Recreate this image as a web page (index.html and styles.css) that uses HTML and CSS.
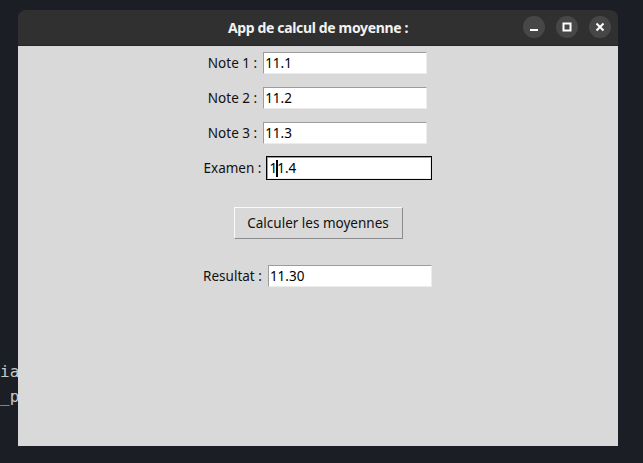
FILE: index.html
```html
<!DOCTYPE html>
<html lang="fr">
<head>
<meta charset="utf-8">
<title>App de calcul de moyenne</title>
<link rel="stylesheet" href="styles.css">
</head>
<body>
<div class="desktop">
  <pre class="term">ia
_p</pre>
  <div class="window">
    <div class="titlebar">
      <span class="title">App de calcul de moyenne :</span>
      <div class="controls">
        <span class="ctl"><svg width="10" height="10" viewBox="0 0 10 10"><rect x="1" y="7" width="8" height="2" fill="#fff"/></svg></span>
        <span class="ctl"><svg width="10" height="10" viewBox="0 0 10 10"><rect x="1.5" y="1.5" width="7" height="7" fill="none" stroke="#fff" stroke-width="2"/></svg></span>
        <span class="ctl"><svg width="10" height="10" viewBox="0 0 10 10"><path d="M1.5 1.5 L8.5 8.5 M8.5 1.5 L1.5 8.5" stroke="#fff" stroke-width="2"/></svg></span>
      </div>
    </div>
    <div class="content">
      <div class="row"><span class="lbl">Note 1 :</span><span class="entry"><span class="field">11.1</span></span></div>
      <div class="row"><span class="lbl">Note 2 :</span><span class="entry"><span class="field">11.2</span></span></div>
      <div class="row"><span class="lbl">Note 3 :</span><span class="entry"><span class="field">11.3</span></span></div>
      <div class="row exam"><span class="lbl">Examen :</span><span class="entry focus"><span class="field">1<span class="caret"></span>1.4</span></span></div>
      <div class="btnrow"><span class="button">Calculer les moyennes</span></div>
      <div class="row result"><span class="lbl">Resultat :</span><span class="entry"><span class="field">11.30</span></span></div>
    </div>
  </div>
</div>
</body>
</html>
```
FILE: styles.css
```css
html, body {
  margin: 0;
  padding: 0;
  background: #1c1e25;
}
.desktop {
  position: relative;
  width: 643px;
  height: 463px;
  overflow: hidden;
  background: #1c1e25;
}
.term {
  position: absolute;
  left: 0;
  top: 359px;
  margin: 0;
  font-family: "DejaVu Sans Mono", monospace;
  font-size: 16px;
  line-height: 25px;
  color: #c8c8c8;
}
.window {
  position: absolute;
  left: 18px;
  top: 10px;
  width: 600px;
  display: flex;
  flex-direction: column;
}
.titlebar {
  height: 35px;
  background: #303030;
  border-radius: 8px 8px 0 0;
  border-bottom: 1px solid #262626;
  display: flex;
  align-items: center;
  justify-content: center;
  position: relative;
}
.title {
  font-family: "Noto Sans", sans-serif;
  font-weight: bold;
  font-size: 14px;
  color: #f2f2f2;
  letter-spacing: -0.35px;
}
.controls {
  position: absolute;
  right: 7px;
  top: 6px;
  display: flex;
  gap: 11px;
}
.ctl {
  width: 22px;
  height: 22px;
  border-radius: 50%;
  background: #474747;
  display: flex;
  align-items: center;
  justify-content: center;
}
.content {
  height: 400px;
  background: #d9d9d9;
  display: flex;
  flex-direction: column;
  align-items: center;
  padding-top: 5px;
  box-sizing: border-box;
  font-family: "Noto Sans", sans-serif;
  font-size: 13.5px;
  color: #111;
}
.row {
  display: flex;
  align-items: center;
  height: 24px;
  margin-bottom: 11px;
}
.row.exam {
  margin-bottom: 26px;
}
.lbl {
  margin-right: 5px;
}
.entry {
  width: 166px;
  height: 24px;
  box-sizing: border-box;
  border: 1px solid transparent;
  display: flex;
}
.entry.focus {
  border-color: #000;
}
.field {
  flex: 1;
  background: #fff;
  border-top: 1px solid #9c9c9c;
  border-left: 1px solid #9c9c9c;
  border-right: 1px solid #ececec;
  border-bottom: 1px solid #ececec;
  padding-left: 1px;
  line-height: 20px;
  color: #000;
}
.caret {
  display: inline-block;
  width: 2px;
  height: 17px;
  background: #000;
  vertical-align: -4px;
  margin: 0 -1px;
}
.btnrow {
  height: 33px;
  margin-bottom: 25px;
  display: flex;
  align-items: flex-start;
}
.button {
  background: #d9d9d9;
  border-top: 1px solid #fafafa;
  border-left: 1px solid #fafafa;
  border-right: 1px solid #8c8c8c;
  border-bottom: 1px solid #8c8c8c;
  width: 169px;
  height: 32px;
  box-sizing: border-box;
  margin-top: 1px;
  display: flex;
  align-items: center;
  justify-content: center;
  color: #111;
}
```
